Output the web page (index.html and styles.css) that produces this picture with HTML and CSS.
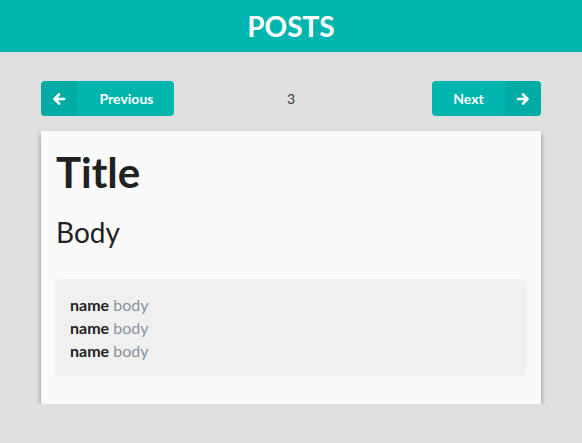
FILE: index.html
```html
<!DOCTYPE html>
<html>
<head>
<meta charset="utf-8">
<link rel="stylesheet" href="styles.css">
</head>
<body>
<header class="top">POSTS</header>
<main class="wrap">
  <nav class="pager">
    <button class="btn btn-left">
      <span class="btn-icon"><svg width="14" height="14" viewBox="0 0 14 14"><path d="M12 7H3M7 2.5L2.5 7 7 11.5" fill="none" stroke="#fff" stroke-width="2.6" stroke-linecap="round" stroke-linejoin="round"/></svg></span>
      <span class="btn-text">Previous</span>
    </button>
    <span class="page-num">3</span>
    <button class="btn btn-right">
      <span class="btn-text">Next</span>
      <span class="btn-icon"><svg width="14" height="14" viewBox="0 0 14 14"><path d="M2 7h9M7 2.5L11.5 7 7 11.5" fill="none" stroke="#fff" stroke-width="2.6" stroke-linecap="round" stroke-linejoin="round"/></svg></span>
    </button>
  </nav>
  <article class="card">
    <h1 class="title">Title</h1>
    <p class="body">Body</p>
    <div class="comments">
      <div class="comment"><span class="name">name</span> <span class="text">body</span></div>
      <div class="comment"><span class="name">name</span> <span class="text">body</span></div>
      <div class="comment"><span class="name">name</span> <span class="text">body</span></div>
    </div>
  </article>
</main>
</body>
</html>
```
FILE: styles.css
```css
* { box-sizing: border-box; }
body {
  margin: 0;
  background: #e0e0e0;
  font-family: Lato, "Open Sans", sans-serif;
  color: #212121;
}
.top {
  height: 52px;
  background: #00b5ad;
  color: #fff;
  font-weight: 700;
  font-size: 28px;
  display: flex;
  align-items: center;
  justify-content: center;
}
.wrap {
  width: 500px;
  margin: 0 auto;
  padding-top: 29px;
}
.pager {
  display: grid;
  grid-template-columns: 1fr auto 1fr;
  align-items: center;
  height: 35px;
}
.page-num {
  font-size: 14px;
  color: #333;
}
.btn {
  display: flex;
  align-items: stretch;
  height: 35px;
  border: 0;
  padding: 0;
  border-radius: 4px;
  background: #00b5ad;
  color: #fff;
  font-family: Lato, sans-serif;
  font-weight: 700;
  font-size: 14px;
  overflow: hidden;
  cursor: pointer;
}
.btn-icon {
  width: 36px;
  display: flex;
  align-items: center;
  justify-content: center;
  background: rgba(0,0,0,0.05);
}
.btn-text {
  display: flex;
  align-items: center;
  justify-content: center;
}
.btn-left { width: 133px; justify-self: start; }
.btn-left .btn-text { flex: 1; padding-left: 2px; }
.btn-right { width: 109px; justify-self: end; }
.btn-right .btn-text { flex: 1; }
.card {
  margin-top: 15px;
  background: #fafafa;
  padding: 14px 14px 28px;
  box-shadow: 0 3px 5px rgba(0,0,0,0.4);
}
.title {
  margin: 0;
  padding-left: 1px;
  font-size: 42px;
  font-weight: 700;
  line-height: 54px;
}
.body {
  margin: 16px 0 0;
  padding-left: 1px;
  font-size: 28px;
  line-height: 34px;
}
.comments {
  margin-top: 30px;
  background: #f0f0f0;
  border-radius: 5px;
  padding: 14px 15px;
  font-size: 16px;
  line-height: 23px;
}
.name { font-weight: 700; color: #212121; }
.text { color: #8a949e; }
```
